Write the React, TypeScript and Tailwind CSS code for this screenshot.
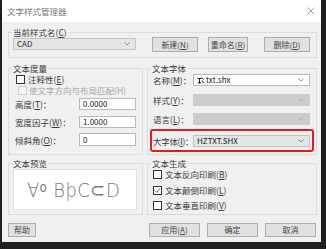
import React from "react";

// chevron for the combo boxes
function Chevron({ color = "#666" }: { color?: string }) {
  return (
    <svg width="6" height="4" viewBox="0 0 6 4" className="shrink-0">
      <path d="M0.5 0.5L3 3L5.5 0.5" fill="none" stroke={color} strokeWidth="0.8" />
    </svg>
  );
}

function Combo({
  children,
  disabled,
  className = "",
}: {
  children?: React.ReactNode;
  disabled?: boolean;
  className?: string;
}) {
  return (
    <div
      className={`h-[12px] border flex items-center justify-between pl-[3px] pr-[5px] shrink-0 ${
        disabled ? "bg-[#cccccc] border-[#cccccc]" : "bg-[#e5e5e5] border-[#c4c4c4]"
      } ${className}`}
    >
      <span className="flex items-center gap-[2px] text-[8px] leading-[10px] text-[#222]">{children}</span>
      <Chevron color={disabled ? "#a8a8a8" : "#707070"} />
    </div>
  );
}

function Checkbox({ checked, disabled }: { checked?: boolean; disabled?: boolean }) {
  return (
    <div
      className={`w-[9px] h-[9px] border shrink-0 flex items-center justify-center ${
        disabled ? "border-[#cfcfcf] bg-[#f4f4f4]" : "border-[#333] bg-white"
      }`}
    >
      {checked && (
        <svg width="7" height="7" viewBox="0 0 7 7">
          <path d="M1 3.6L2.8 5.4L6 1.4" fill="none" stroke="#333" strokeWidth="0.8" />
        </svg>
      )}
    </div>
  );
}

function Btn({ children, className = "" }: { children: React.ReactNode; className?: string }) {
  return (
    <div
      className={`border border-[#adadad] bg-[#e1e1e1] flex items-center justify-center text-[8px] text-[#444] whitespace-nowrap shrink-0 ${className}`}
    >
      {children}
    </div>
  );
}

function Input({ value }: { value: string }) {
  return (
    <div className="w-[57px] h-full bg-white border border-[#b9b9b9] flex items-center pl-[3px] text-[8px] text-[#222] shrink-0">
      {value}
    </div>
  );
}

// small shx font icon
function ShxIcon() {
  return (
    <svg width="7" height="7" viewBox="0 0 7 7" className="shrink-0">
      <path d="M0.5 1.5H4.5M2.5 1.5V6.5M1 6.5L2.5 4.5L4 6.5M4.5 0.5L6.5 2.5M5 3.5L6.5 6" fill="none" stroke="#111" strokeWidth="1" />
    </svg>
  );
}

const u = "underline decoration-[0.5px] underline-offset-[1px]";

export default function App() {
  return (
    <div className="w-[326px] h-[249px] bg-[#1f1f1f] pl-[2px] font-['Noto_Sans_CJK_SC','Noto_Sans',sans-serif] text-[8.5px] leading-[10px] text-[#3a3a3a] whitespace-nowrap">
      <div className="w-[319px] h-[242px] bg-[#f0f0f0] flex flex-col">
        {/* title bar */}
        <div className="h-[22px] bg-white flex items-center justify-between pl-[5px] pr-[6px] shrink-0">
          <span className="text-[8.5px] text-[#777]">文字样式管理器</span>
          <svg width="8" height="8" viewBox="0 0 8 8">
            <path d="M0.5 0.5L7.5 7.5M7.5 0.5L0.5 7.5" stroke="#8a8a8a" strokeWidth="0.8" />
          </svg>
        </div>

        <div className="flex-1 flex flex-col pl-[6px] pr-[4px] pt-[5px]">
          {/* current style */}
          <fieldset className="h-[31px] border border-[#dcdcdc] px-[4px]">
            <legend className="px-[1px] -ml-[1px]">
              当前样式名(<span className={u}>C</span>)
            </legend>
            <div className="flex items-start">
              <Combo className="w-[123px] mt-[1px]">CAD</Combo>
              <Btn className="w-[46px] h-[15px] ml-[16px]">
                新建(<span className={u}>N</span>)
              </Btn>
              <Btn className="w-[40px] h-[15px] ml-[10px]">
                重命名(<span className={u}>R</span>)
              </Btn>
              <Btn className="w-[46px] h-[15px] ml-[16px]">
                删除(<span className={u}>D</span>)
              </Btn>
            </div>
          </fieldset>

          {/* metrics + font */}
          <div className="grid grid-cols-[135px_170px] gap-x-[4px] mt-[5px]">
            <fieldset className="h-[92px] border border-[#dcdcdc] pl-[6px] pr-[2px] min-w-0">
              <legend className="px-[1px] -ml-[3px]">文本度量</legend>
              <div className="mt-[1px] h-[10px] flex items-center ml-[1px]">
                <Checkbox />
                <span className="ml-[3px] leading-[9px]">
                  注释性(<span className={u}>E</span>)
                </span>
              </div>
              <div className="mt-[1px] h-[10px] flex items-center ml-[3px] overflow-hidden">
                <Checkbox disabled />
                <span className="ml-[2px] leading-[9px] text-[#a6a6a6]">
                  使文字方向与布局匹配(<span className={u}>H</span>)
                </span>
              </div>
              <div className="mt-[3px] h-[12px] flex items-center">
                <span className="w-[64px] shrink-0">
                  高度(<span className={u}>T</span>)：
                </span>
                <Input value="0.0000" />
              </div>
              <div className="mt-[6px] h-[12px] flex items-center">
                <span className="w-[64px] shrink-0">
                  宽度因子(<span className={u}>W</span>)：
                </span>
                <Input value="1.0000" />
              </div>
              <div className="mt-[5px] h-[13px] flex items-center">
                <span className="w-[64px] shrink-0">
                  倾斜角(<span className={u}>O</span>)：
                </span>
                <Input value="0" />
              </div>
            </fieldset>

            <fieldset className="h-[92px] border border-[#dcdcdc] pl-[5px] pr-[4px] min-w-0">
              <legend className="px-[1px] -ml-[2px]">文本字体</legend>
              <div className="mt-[1px] h-[12px] flex items-center">
                <span className="w-[40px] shrink-0">
                  名称(<span className={u}>M</span>)：
                </span>
                <Combo className="w-[117px] bg-white! border-[#b9b9b9]!">
                  <ShxIcon />
                  <span className="text-[8px]">txt.shx</span>
                </Combo>
              </div>
              <div className="mt-[8px] h-[12px] flex items-center">
                <span className="w-[40px] shrink-0">
                  样式(<span className={u}>Y</span>)：
                </span>
                <Combo disabled className="w-[117px]" />
              </div>
              <div className="mt-[7px] h-[12px] flex items-center">
                <span className="w-[40px] shrink-0">
                  语言(<span className={u}>L</span>)：
                </span>
                <Combo disabled className="w-[117px]" />
              </div>
              <div className="mt-[4px] -ml-[3px] w-[164px] h-[23px] border-2 border-[#e5191f] rounded-[3px] flex items-center pl-[1px]">
                <span className="w-[40px] shrink-0 tracking-[-0.3px]">
                  大字体(<span className={u}>I</span>)：
                </span>
                <Combo className="w-[117px]">HZTXT.SHX</Combo>
              </div>
            </fieldset>
          </div>

          {/* preview + generation */}
          <div className="grid grid-cols-[135px_170px] gap-x-[4px] mt-[3px]">
            <fieldset className="h-[57px] border border-[#dcdcdc] px-[4px] min-w-0">
              <legend className="px-[1px] -ml-[1px]">文本预览</legend>
              <div className="mt-[1px] w-[124px] h-[41px] bg-white border border-[#e2e2e2] flex items-center pl-[13px] overflow-hidden">
                <span className="font-['DejaVu_Sans',sans-serif] font-extralight text-[20px] leading-[20px] text-[#7a7a7a] tracking-[0.5px] scale-x-90 origin-left inline-block">
                  ∀ᵒ BϸC⊂D
                </span>
              </div>
            </fieldset>

            <fieldset className="h-[57px] border border-[#dcdcdc] pl-[5px] min-w-0">
              <legend className="px-[1px] -ml-[2px]">文本生成</legend>
              <div className="mt-[1px] h-[10px] flex items-center">
                <Checkbox />
                <span className="ml-[3px] leading-[9px]">
                  文本反向印刷(<span className={u}>B</span>)
                </span>
              </div>
              <div className="mt-[6px] h-[10px] flex items-center">
                <Checkbox checked />
                <span className="ml-[3px] leading-[9px]">
                  文本颠倒印刷(<span className={u}>L</span>)
                </span>
              </div>
              <div className="mt-[5px] h-[10px] flex items-center">
                <Checkbox />
                <span className="ml-[3px] leading-[9px]">
                  文本垂直印刷(<span className={u}>V</span>)
                </span>
              </div>
            </fieldset>
          </div>

          {/* bottom buttons */}
          <div className="mt-[8px] h-[14px] flex">
            <Btn className="w-[28px] h-[14px]">帮助</Btn>
            <Btn className="w-[51px] h-[14px] ml-[113px]">
              应用(<span className={u}>A</span>)
            </Btn>
            <Btn className="w-[51px] h-[14px] ml-[7px]">确定</Btn>
            <Btn className="w-[51px] h-[14px] ml-[7px]">取消</Btn>
          </div>
        </div>
      </div>
    </div>
  );
}
